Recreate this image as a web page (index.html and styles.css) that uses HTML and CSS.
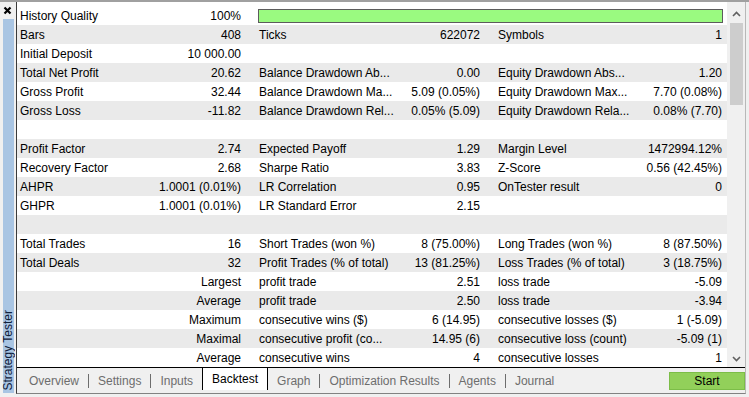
FILE: index.html
```html
<!DOCTYPE html>
<html lang="en">
<head>
  <meta charset="UTF-8">
  <title>Strategy Tester - Backtest</title>
  <link rel="stylesheet" href="styles.css">
</head>
<body>
  <div class="window">
    <div class="side">
      <div class="close">
        <svg width="9" height="9" viewBox="0 0 9 9"><path d="M1.5 1.5 L7.5 7.5 M7.5 1.5 L1.5 7.5" stroke="#000" stroke-width="2.2"/></svg>
      </div>
      <div class="side-bar"><span class="side-title">Strategy Tester</span></div>
    </div>

    <div class="main">
      <div class="view">
        <div class="report">
          <div class="row">
            <div class="cell"><span>History Quality</span><span>100%</span></div>
            <div class="cell wide"><div class="quality-bar"></div></div>
          </div>
          <div class="row">
            <div class="cell"><span>Bars</span><span>408</span></div>
            <div class="cell"><span>Ticks</span><span>622072</span></div>
            <div class="cell"><span>Symbols</span><span>1</span></div>
          </div>
          <div class="row">
            <div class="cell"><span>Initial Deposit</span><span>10 000.00</span></div>
            <div class="cell"></div>
            <div class="cell"></div>
          </div>
          <div class="row">
            <div class="cell"><span>Total Net Profit</span><span>20.62</span></div>
            <div class="cell"><span>Balance Drawdown Ab...</span><span>0.00</span></div>
            <div class="cell"><span>Equity Drawdown Abs...</span><span>1.20</span></div>
          </div>
          <div class="row">
            <div class="cell"><span>Gross Profit</span><span>32.44</span></div>
            <div class="cell"><span>Balance Drawdown Ma...</span><span>5.09 (0.05%)</span></div>
            <div class="cell"><span>Equity Drawdown Max...</span><span>7.70 (0.08%)</span></div>
          </div>
          <div class="row">
            <div class="cell"><span>Gross Loss</span><span>-11.82</span></div>
            <div class="cell"><span>Balance Drawdown Rel...</span><span>0.05% (5.09)</span></div>
            <div class="cell"><span>Equity Drawdown Rela...</span><span>0.08% (7.70)</span></div>
          </div>
          <div class="row"></div>
          <div class="row">
            <div class="cell"><span>Profit Factor</span><span>2.74</span></div>
            <div class="cell"><span>Expected Payoff</span><span>1.29</span></div>
            <div class="cell"><span>Margin Level</span><span>1472994.12%</span></div>
          </div>
          <div class="row">
            <div class="cell"><span>Recovery Factor</span><span>2.68</span></div>
            <div class="cell"><span>Sharpe Ratio</span><span>3.83</span></div>
            <div class="cell"><span>Z-Score</span><span>0.56 (42.45%)</span></div>
          </div>
          <div class="row">
            <div class="cell"><span>AHPR</span><span>1.0001 (0.01%)</span></div>
            <div class="cell"><span>LR Correlation</span><span>0.95</span></div>
            <div class="cell"><span>OnTester result</span><span>0</span></div>
          </div>
          <div class="row">
            <div class="cell"><span>GHPR</span><span>1.0001 (0.01%)</span></div>
            <div class="cell"><span>LR Standard Error</span><span>2.15</span></div>
            <div class="cell"></div>
          </div>
          <div class="row"></div>
          <div class="row">
            <div class="cell"><span>Total Trades</span><span>16</span></div>
            <div class="cell"><span>Short Trades (won %)</span><span>8 (75.00%)</span></div>
            <div class="cell"><span>Long Trades (won %)</span><span>8 (87.50%)</span></div>
          </div>
          <div class="row">
            <div class="cell"><span>Total Deals</span><span>32</span></div>
            <div class="cell"><span>Profit Trades (% of total)</span><span>13 (81.25%)</span></div>
            <div class="cell"><span>Loss Trades (% of total)</span><span>3 (18.75%)</span></div>
          </div>
          <div class="row">
            <div class="cell"><span></span><span>Largest</span></div>
            <div class="cell"><span>profit trade</span><span>2.51</span></div>
            <div class="cell"><span>loss trade</span><span>-5.09</span></div>
          </div>
          <div class="row">
            <div class="cell"><span></span><span>Average</span></div>
            <div class="cell"><span>profit trade</span><span>2.50</span></div>
            <div class="cell"><span>loss trade</span><span>-3.94</span></div>
          </div>
          <div class="row">
            <div class="cell"><span></span><span>Maximum</span></div>
            <div class="cell"><span>consecutive wins ($)</span><span>6 (14.95)</span></div>
            <div class="cell"><span>consecutive losses ($)</span><span>1 (-5.09)</span></div>
          </div>
          <div class="row">
            <div class="cell"><span></span><span>Maximal</span></div>
            <div class="cell"><span>consecutive profit (co...</span><span>14.95 (6)</span></div>
            <div class="cell"><span>consecutive loss (count)</span><span>-5.09 (1)</span></div>
          </div>
          <div class="row">
            <div class="cell"><span></span><span>Average</span></div>
            <div class="cell"><span>consecutive wins</span><span>4</span></div>
            <div class="cell"><span>consecutive losses</span><span>1</span></div>
          </div>
        </div>

        <div class="scrollbar">
          <div class="arrow">
            <svg width="9" height="6" viewBox="0 0 9 6"><path d="M1 5 L4.5 1.5 L8 5" fill="none" stroke="#606060" stroke-width="1.6"/></svg>
          </div>
          <div class="track"><div class="thumb"></div></div>
          <div class="arrow">
            <svg width="9" height="6" viewBox="0 0 9 6"><path d="M1 1 L4.5 4.5 L8 1" fill="none" stroke="#606060" stroke-width="1.6"/></svg>
          </div>
        </div>
      </div>

      <div class="tabs">
        <span class="tab">Overview</span>
        <span class="sep"></span>
        <span class="tab">Settings</span>
        <span class="sep"></span>
        <span class="tab">Inputs</span>
        <span class="tab active">Backtest</span>
        <span class="tab">Graph</span>
        <span class="sep"></span>
        <span class="tab">Optimization Results</span>
        <span class="sep"></span>
        <span class="tab">Agents</span>
        <span class="sep"></span>
        <span class="tab">Journal</span>
        <button class="start">Start</button>
      </div>
    </div>
  </div>
</body>
</html>
```

FILE: styles.css
```css
body {
  margin: 0;
  font-family: "Liberation Sans", Arial, sans-serif;
  font-size: 12px;
  color: #000;
  background-color: #f0f0f0;
}

.window {
  width: 749px;
  height: 397px;
  box-sizing: border-box;
  border-top: 2px solid #a0a0a0;
  padding: 0 3px 3px 0;
  display: flex;
}

/* left docking strip */
.side {
  width: 16px;
  display: flex;
  flex-direction: column;
}

.side .close {
  height: 17px;
  display: flex;
  align-items: center;
  justify-content: center;
  padding-right: 1px;
}

.side-bar {
  flex: 1;
  margin: 0 2px 1px 3px;
  background-color: #a9c5e3;
  display: flex;
  flex-direction: column;
  justify-content: flex-end;
  align-items: center;
  padding-bottom: 3px;
}

.side-title {
  writing-mode: vertical-rl;
  transform: rotate(180deg);
  font-size: 12px;
  color: #10203a;
  line-height: 11px;
}

.main {
  flex: 1;
  display: flex;
  flex-direction: column;
  border-left: 1px solid #3a3a3a;
  border-right: 1px solid #b8b8b8;
  border-bottom: 1px solid #828282;
}

.view {
  height: 365px;
  display: flex;
}

.report {
  flex: 1;
  padding-top: 4px;
  background-color: white;
}

.row {
  height: 19px;
  display: grid;
  grid-template-columns: 239px 239px 1fr;
}

.row:nth-child(even) {
  background-color: #eaeaea;
}

.cell {
  display: flex;
  justify-content: space-between;
  align-items: center;
  padding: 0 15px 0 3px;
  white-space: nowrap;
}

.cell:nth-child(3) {
  padding-right: 5px;
}

.cell.wide {
  grid-column: span 2;
  padding: 0 4px 0 2px;
}

.quality-bar {
  width: 100%;
  height: 12px;
  background-color: #9afa80;
  border: 1px solid #5c5c5c;
}

/* vertical scrollbar */
.scrollbar {
  width: 18px;
  background-color: #f0f0f0;
  display: flex;
  flex-direction: column;
  padding-top: 3px;
}

.scrollbar .arrow {
  height: 17px;
  display: flex;
  align-items: center;
  justify-content: center;
}

.scrollbar .track {
  flex: 1;
  padding: 1px 2px 0 3px;
}

.scrollbar .thumb {
  height: 82px;
  background-color: #cdcdcd;
}

/* bottom tabs */
.tabs {
  height: 25px;
  border-top: 1px solid #000;
  display: flex;
  align-items: center;
  padding-left: 3px;
}

.tab {
  padding: 0 9px;
  color: #6d6d6d;
}

.tab.active {
  align-self: flex-start;
  height: 22px;
  line-height: 22px;
  padding: 0 9px;
  background-color: white;
  color: #000;
  border-left: 1px solid #000;
  border-right: 1px solid #000;
}

.sep {
  width: 1px;
  height: 14px;
  background-color: #6d6d6d;
}

.start {
  margin-left: auto;
  width: 76px;
  height: 18px;
  padding: 0;
  font-family: inherit;
  font-size: 12px;
  color: #000;
  background-color: #92d05a;
  border: 1px solid #7cbd48;
}
```
